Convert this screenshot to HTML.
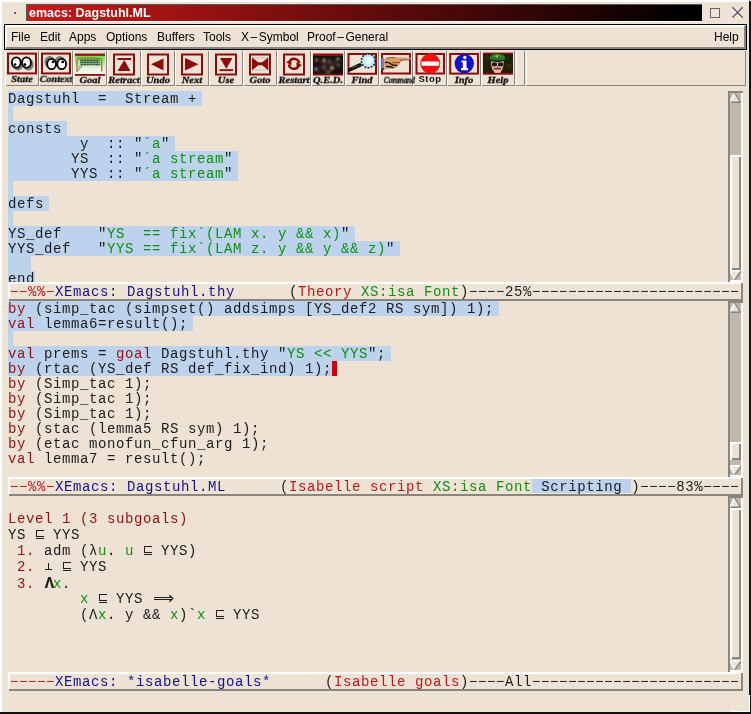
<!DOCTYPE html><html><head><meta charset="utf-8"><style>
*{box-sizing:border-box}
body{margin:0;width:751px;height:714px;overflow:hidden;background:#eee2d5;position:relative;font-family:"Liberation Mono",monospace;}
.a{position:absolute}
.t,.ml,.menu,.lbl,.ttl{will-change:transform}
.t{position:absolute;left:8px;height:15px;font-size:14px;letter-spacing:0.6px;line-height:15px;white-space:pre;color:#1c1c1c}
.ml{position:absolute;left:10px;height:15px;font-size:14px;letter-spacing:0.6px;line-height:15px;white-space:pre;color:#1c1c1c}
.hl{position:absolute;background:#bdd2ec}
.bo{font-weight:bold;display:inline-block;width:9px;font-size:16.5px;letter-spacing:0;text-indent:0.5px}.r{color:#941010}.g{color:#109010}.b{color:#12128e}.mr{color:#bc1818}
.menu{position:absolute;top:30px;font-family:"Liberation Sans",sans-serif;font-size:12px;line-height:14px;color:#000}
.lbl{position:absolute;top:74px;width:34px;text-align:center;font-family:"Liberation Serif",serif;font-weight:bold;font-style:italic;font-size:10.5px;line-height:12px;color:#111;-webkit-text-stroke:0.35px #111}
</style></head><body>

<div class="a" style="left:0;top:0;width:2px;height:714px;background:#fff"></div>
<div class="a" style="left:0;top:0;width:749px;height:2px;background:#fff"></div>
<div class="a" style="left:749px;top:1px;width:2px;height:694px;background:#111"></div>
<div class="a" style="left:0;top:712px;width:733px;height:2px;background:#111"></div>
<div class="a" style="left:750px;top:695px;width:1px;height:19px;background:#111"></div>
<div class="a" style="left:749px;top:695px;width:1px;height:17px;background:#fff"></div>
<div class="a" style="left:747px;top:695px;width:2px;height:1px;background:#fff"></div>
<div class="a" style="left:0;top:712px;width:751px;height:2px;background:#111"></div>
<div class="a" style="left:732px;top:711px;width:18px;height:1px;background:#fff"></div>
<div class="a" style="left:732px;top:709px;width:1px;height:2px;background:#fff"></div>
<div class="a" style="left:26px;top:4px;width:676px;height:17px;background:linear-gradient(to right,#cc1818,#000 98%);border-left:1px solid #555;border-top:1px solid #555"></div>
<div class="a" style="left:26px;top:21px;width:677px;height:1px;background:#fff"></div>
<div class="a ttl" style="left:29px;top:4.7px;height:17px;font-family:'Liberation Sans',sans-serif;font-weight:bold;font-size:12.5px;line-height:17px;color:#fff;white-space:pre">emacs: Dagstuhl.ML</div>
<div class="a" style="left:13px;top:11px;width:3px;height:3px;background:#555;border-top:1px solid #fff;border-left:1px solid #fff"></div>
<div class="a" style="left:710px;top:8px;width:10px;height:10px;border:1px solid #666"></div>
<svg class="a" style="left:728px;top:3.4px" width="20" height="18"><path d="M4.3 4.3 L14.7 14.7 M14.7 4.3 L4.3 14.7" stroke="#fff" stroke-width="1.5" transform="translate(-0.9,0.9)"/><path d="M4.3 4.3 L14.7 14.7 M14.7 4.3 L4.3 14.7" stroke="#666" stroke-width="1.6"/></svg>
<div class="a" style="left:4px;top:24px;width:743px;height:26px;border:1px solid #000;background:#eee2d5"></div>
<div class="a" style="left:5px;top:25px;width:741px;height:2px;background:#fff"></div>
<div class="a" style="left:5px;top:25px;width:2px;height:23px;background:#fff"></div>
<div class="a" style="left:6px;top:47px;width:740px;height:2px;background:#8a867e"></div>
<div class="a" style="left:744px;top:26px;width:2px;height:23px;background:#8a867e"></div>
<div class="menu" style="left:11px">File</div>
<div class="menu" style="left:40px">Edit</div>
<div class="menu" style="left:69px">Apps</div>
<div class="menu" style="left:106px">Options</div>
<div class="menu" style="left:157px">Buffers</div>
<div class="menu" style="left:203px">Tools</div>
<div class="menu" style="left:241px">X<span style="margin:0 1.5px">–</span>Symbol</div>
<div class="menu" style="left:307px">Proof<span style="margin:0 1.5px">–</span>General</div>
<div class="menu" style="left:714px">Help</div>
<div class="a" style="left:5px;top:51px;width:1px;height:35px;background:#fff"></div>
<div class="a" style="left:38px;top:51px;width:1px;height:35px;background:#8a867e"></div>
<div class="a" style="left:6px;top:85px;width:33px;height:1px;background:#8a867e"></div>
<div class="a" style="left:39px;top:51px;width:1px;height:35px;background:#fff"></div>
<div class="a" style="left:72px;top:51px;width:1px;height:35px;background:#8a867e"></div>
<div class="a" style="left:40px;top:85px;width:33px;height:1px;background:#8a867e"></div>
<div class="a" style="left:73px;top:51px;width:1px;height:35px;background:#fff"></div>
<div class="a" style="left:106px;top:51px;width:1px;height:35px;background:#8a867e"></div>
<div class="a" style="left:74px;top:85px;width:33px;height:1px;background:#8a867e"></div>
<div class="a" style="left:107px;top:51px;width:1px;height:35px;background:#fff"></div>
<div class="a" style="left:140px;top:51px;width:1px;height:35px;background:#8a867e"></div>
<div class="a" style="left:108px;top:85px;width:33px;height:1px;background:#8a867e"></div>
<div class="a" style="left:141px;top:51px;width:1px;height:35px;background:#fff"></div>
<div class="a" style="left:174px;top:51px;width:1px;height:35px;background:#8a867e"></div>
<div class="a" style="left:142px;top:85px;width:33px;height:1px;background:#8a867e"></div>
<div class="a" style="left:175px;top:51px;width:1px;height:35px;background:#fff"></div>
<div class="a" style="left:208px;top:51px;width:1px;height:35px;background:#8a867e"></div>
<div class="a" style="left:176px;top:85px;width:33px;height:1px;background:#8a867e"></div>
<div class="a" style="left:209px;top:51px;width:1px;height:35px;background:#fff"></div>
<div class="a" style="left:242px;top:51px;width:1px;height:35px;background:#8a867e"></div>
<div class="a" style="left:210px;top:85px;width:33px;height:1px;background:#8a867e"></div>
<div class="a" style="left:243px;top:51px;width:1px;height:35px;background:#fff"></div>
<div class="a" style="left:276px;top:51px;width:1px;height:35px;background:#8a867e"></div>
<div class="a" style="left:244px;top:85px;width:33px;height:1px;background:#8a867e"></div>
<div class="a" style="left:277px;top:51px;width:1px;height:35px;background:#fff"></div>
<div class="a" style="left:310px;top:51px;width:1px;height:35px;background:#8a867e"></div>
<div class="a" style="left:278px;top:85px;width:33px;height:1px;background:#8a867e"></div>
<div class="a" style="left:311px;top:51px;width:1px;height:35px;background:#fff"></div>
<div class="a" style="left:344px;top:51px;width:1px;height:35px;background:#8a867e"></div>
<div class="a" style="left:312px;top:85px;width:33px;height:1px;background:#8a867e"></div>
<div class="a" style="left:345px;top:51px;width:1px;height:35px;background:#fff"></div>
<div class="a" style="left:378px;top:51px;width:1px;height:35px;background:#8a867e"></div>
<div class="a" style="left:346px;top:85px;width:33px;height:1px;background:#8a867e"></div>
<div class="a" style="left:379px;top:51px;width:1px;height:35px;background:#fff"></div>
<div class="a" style="left:412px;top:51px;width:1px;height:35px;background:#8a867e"></div>
<div class="a" style="left:380px;top:85px;width:33px;height:1px;background:#8a867e"></div>
<div class="a" style="left:413px;top:51px;width:1px;height:35px;background:#fff"></div>
<div class="a" style="left:446px;top:51px;width:1px;height:35px;background:#8a867e"></div>
<div class="a" style="left:414px;top:85px;width:33px;height:1px;background:#8a867e"></div>
<div class="a" style="left:447px;top:51px;width:1px;height:35px;background:#fff"></div>
<div class="a" style="left:480px;top:51px;width:1px;height:35px;background:#8a867e"></div>
<div class="a" style="left:448px;top:85px;width:33px;height:1px;background:#8a867e"></div>
<div class="a" style="left:481px;top:51px;width:1px;height:35px;background:#fff"></div>
<div class="a" style="left:514px;top:51px;width:1px;height:35px;background:#8a867e"></div>
<div class="a" style="left:482px;top:85px;width:33px;height:1px;background:#8a867e"></div>
<div class="a" style="left:516px;top:51px;width:1px;height:35px;background:#fff"></div>
<div class="a" style="left:524px;top:51px;width:1px;height:35px;background:#8a867e"></div>
<div class="a" style="left:516px;top:85px;width:9px;height:1px;background:#8a867e"></div>
<div class="a" style="left:526px;top:51px;width:1px;height:35px;background:#fff"></div>
<div class="a" style="left:745px;top:51px;width:1px;height:35px;background:#8a867e"></div>
<div class="a" style="left:526px;top:85px;width:220px;height:1px;background:#8a867e"></div>
<div class="lbl" style="left:5px;top:74.0px;transform:scaleY(0.9);transform-origin:50% 0;">State</div>
<div class="lbl" style="left:39px;top:74.0px;transform:scaleY(0.9);transform-origin:50% 0;transform:scale(0.96,0.9);">Context</div>
<div class="lbl" style="left:73px;top:75.0px;transform:scaleY(0.9);transform-origin:50% 0;">Goal</div>
<div class="lbl" style="left:107px;top:75.0px;transform:scaleY(0.9);transform-origin:50% 0;">Retract</div>
<div class="lbl" style="left:141px;top:75.0px;transform:scaleY(0.9);transform-origin:50% 0;">Undo</div>
<div class="lbl" style="left:175px;top:75.0px;transform:scaleY(0.9);transform-origin:50% 0;">Next</div>
<div class="lbl" style="left:209px;top:75.0px;transform:scaleY(0.9);transform-origin:50% 0;">Use</div>
<div class="lbl" style="left:243px;top:75.0px;transform:scaleY(0.9);transform-origin:50% 0;">Goto</div>
<div class="lbl" style="left:277px;top:75.0px;transform:scaleY(0.9);transform-origin:50% 0;">Restart</div>
<div class="lbl" style="left:311px;top:75.0px;transform:scaleY(0.9);transform-origin:50% 0;">Q.E.D.</div>
<div class="lbl" style="left:345px;top:75.0px;transform:scaleY(0.9);transform-origin:50% 0;">Find</div>
<div class="lbl" style="left:379px;top:74.5px;transform:scale(0.72,0.9);transform-origin:50% 0;font-size:10.5px;letter-spacing:-0.3px;color:#333;">Command</div>
<div class="lbl" style="left:413px;font-family:'Liberation Sans',sans-serif;font-style:normal;font-weight:bold;font-size:9.5px;letter-spacing:0.5px;-webkit-text-stroke:0;color:#111;top:73.3px;">Stop</div>
<div class="lbl" style="left:447px;top:74.5px;transform:scaleY(0.9);transform-origin:50% 0;">Info</div>
<div class="lbl" style="left:481px;top:75.0px;transform:scaleY(0.9);transform-origin:50% 0;">Help</div>
<svg class="a" style="left:0;top:0" width="751" height="90"><rect x="8.0" y="53.6" width="28.0" height="19.8" fill="none" stroke="#8b0c0c" stroke-width="2"/><ellipse cx="18.05" cy="64.5" rx="5.3" ry="6" fill="#666" opacity="0.85"/><ellipse cx="28.30" cy="64.5" rx="5.3" ry="6" fill="#666" opacity="0.85"/><ellipse cx="16.25" cy="62.5" rx="4.4" ry="5.2" fill="#fff" stroke="#000" stroke-width="1.8"/><ellipse cx="26.50" cy="62.5" rx="4.4" ry="5.2" fill="#fff" stroke="#000" stroke-width="1.8"/><circle cx="15" cy="64.6" r="1.4" fill="#000"/><circle cx="24.9" cy="64.6" r="1.4" fill="#000"/><rect x="42.0" y="53.6" width="28.0" height="19.8" fill="none" stroke="#8b0c0c" stroke-width="2"/><ellipse cx="49.80" cy="62" rx="5.3" ry="6" fill="#666" opacity="0.85"/><ellipse cx="59.90" cy="62" rx="5.3" ry="6" fill="#666" opacity="0.85"/><ellipse cx="51.60" cy="64" rx="4.4" ry="5.2" fill="#fff" stroke="#000" stroke-width="1.8"/><ellipse cx="61.70" cy="64" rx="4.4" ry="5.2" fill="#fff" stroke="#000" stroke-width="1.8"/><circle cx="53.2" cy="61.9" r="1.4" fill="#000"/><circle cx="62.7" cy="61.9" r="1.4" fill="#000"/><defs><linearGradient id="gg" x1="0" y1="0" x2="0" y2="1"><stop offset="0" stop-color="#5ee050"/><stop offset="0.5" stop-color="#c8eec0"/><stop offset="0.75" stop-color="#eef4ea"/><stop offset="1" stop-color="#f4f4f0"/></linearGradient></defs><rect x="75" y="55.8" width="30" height="18.2" fill="url(#gg)"/><rect x="75" y="53.6" width="30" height="2.2" fill="#8b0c0c"/><rect x="75" y="74" width="30" height="1.8" fill="#8b0c0c"/><path d="M80 59.5 Q90 58 100 59.5 L100.5 66 Q90 65 80.5 66 Z" fill="#445040" opacity="0.35"/><path d="M80 60.5 H100 M80 62.5 H100.5 M80.5 64.5 H100.5 M82 59 V66 M85 59 V66 M88 59 V65.5 M91 59 V65.5 M94 59 V65.5 M97 59 V66 M80 66 L78 71 M82 66 L79 70" fill="none" stroke="#1a2018" stroke-width="0.7" stroke-dasharray="1 0.7"/><path d="M77 72 V60 Q77.5 58.2 80 58.3 Q90 57.5 100 58.3 Q102 58.5 101.8 60.5 V71.5" fill="none" stroke="#a07818" stroke-width="1.3"/><rect x="114.0" y="54.5" width="20.0" height="20.0" fill="none" stroke="#8b0c0c" stroke-width="2"/><rect x="117.5" y="58" width="13.5" height="2" fill="#8b0c0c"/><path d="M124.3 60 L130.5 71 H117.5 Z" fill="#8b0c0c"/><rect x="148.0" y="54.5" width="20.0" height="20.0" fill="none" stroke="#8b0c0c" stroke-width="2"/><path d="M151 64.3 L163.5 58.5 V70.5 Z" fill="#8b0c0c"/><rect x="182.0" y="54.5" width="20.0" height="20.0" fill="none" stroke="#8b0c0c" stroke-width="2"/><path d="M198.5 64.3 L185 58 V70.5 Z" fill="#8b0c0c"/><rect x="216.0" y="54.5" width="20.0" height="20.0" fill="none" stroke="#8b0c0c" stroke-width="2"/><path d="M220 58 H232.5 L226.3 68.8 Z" fill="#8b0c0c"/><rect x="219.5" y="69.2" width="13.5" height="1.9" fill="#8b0c0c"/><rect x="250.0" y="54.5" width="20.0" height="20.0" fill="none" stroke="#8b0c0c" stroke-width="2"/><path d="M252 57.8 H268.3 M252 70 H268.3" stroke="#b8c0c8" stroke-width="0.9"/><path d="M252 57.5 L260.2 63.8 L268.3 57.5 V70.2 L260.2 63.8 L252 70.2 Z" fill="#8b0c0c"/><rect x="258.7" y="62.3" width="3" height="3" fill="#8b0c0c"/><rect x="284.0" y="54.5" width="20.0" height="20.0" fill="none" stroke="#8b0c0c" stroke-width="2"/><path d="M299.2 63.3 A5.2 5.3 0 0 0 289.5 61.5" fill="none" stroke="#8b0c0c" stroke-width="2.4"/><path d="M288.8 64.3 A5.2 5.3 0 0 0 298.5 66.1" fill="none" stroke="#8b0c0c" stroke-width="2.4"/><path d="M286 62.3 L291.2 59.6 L291.6 65.6 Z" fill="#8b0c0c"/><path d="M302 65.3 L296.8 68 L296.4 62 Z" fill="#8b0c0c"/><rect x="313" y="53.5" width="30" height="22" fill="#8b0c0c"/><defs><radialGradient id="qg" cx="0.5" cy="0.5" r="0.7"><stop offset="0" stop-color="#2a201c"/><stop offset="1" stop-color="#0e0a08"/></radialGradient><filter id="bl" x="-50%" y="-50%" width="200%" height="200%"><feGaussianBlur stdDeviation="0.8"/></filter></defs><rect x="313" y="56" width="30" height="17.8" fill="url(#qg)"/><g filter="url(#bl)"><path d="M316 69 L320 73 M324 60 L326 73 M332 68 L328 73 M338 59 L331 67" stroke="#b89070" stroke-width="0.8" opacity="0.6"/><circle cx="316.6" cy="60.0" r="1.2" fill="#d8a090"/><circle cx="324.0" cy="60.3" r="1.5" fill="#f0a070"/><circle cx="329.5" cy="61.5" r="1.0" fill="#c0c8e8"/><circle cx="338.0" cy="59.0" r="1.4" fill="#80c070"/><circle cx="338.5" cy="65.0" r="1.1" fill="#d8b8a0"/><circle cx="323.0" cy="67.5" r="1.1" fill="#d090b8"/><circle cx="316.0" cy="69.0" r="1.5" fill="#c098e8"/><circle cx="332.0" cy="68.0" r="1.5" fill="#f0e090"/><circle cx="328.5" cy="72.0" r="1.0" fill="#f0e0c0"/></g><rect x="348.5" y="54.0" width="27.5" height="19.8" fill="none" stroke="#8b0c0c" stroke-width="2"/><path d="M349.5 69.8 L360 65" stroke="#111" stroke-width="3.6" stroke-linecap="round"/><path d="M352 68 L358 65.4" stroke="#666" stroke-width="0.8"/><circle cx="368.3" cy="60.8" r="6.9" fill="#c4ecfa" stroke="#1a2a3a" stroke-width="1.6" stroke-dasharray="2 1.2"/><circle cx="368.6" cy="60.4" r="3.4" fill="#f4fcff" opacity="0.8"/><rect x="382.0" y="54.0" width="28.0" height="19.5" fill="none" stroke="#8b0c0c" stroke-width="2"/><rect x="381.3" y="58" width="3" height="11.8" fill="#8080b8"/><rect x="381.3" y="68.5" width="3" height="1.3" fill="#202040"/><path d="M384.3 59.5 Q387 57.6 393 57.3 L411.5 57.8 Q412.3 59 411 59.6 L402 60.3 Q401.5 62 400 62.6 Q400.3 64.6 398 65.3 Q397.5 67.6 394 68.2 Q389 69.3 384.3 68.8 Z" fill="#dc9c64"/><path d="M385 62.5 Q389 61.8 391 64 Q393 66 397 65.5 M386 66.5 Q390 66.2 393.5 67.8" stroke="#111" stroke-width="1.4" fill="none"/><path d="M392 62.8 Q396 62.3 400 62.6 M393 65 Q396 64.8 398 65.3 M400 60.3 L411 59.6 M386 58.3 Q390 57.4 395 57.4" stroke="#5a3010" stroke-width="0.7" fill="none"/><rect x="416.5" y="54.0" width="27.5" height="19.5" fill="none" stroke="#8b0c0c" stroke-width="2"/><circle cx="430.3" cy="63.6" r="10" fill="#ee1111"/><rect x="421.5" y="61.5" width="17.7" height="4.3" fill="#fff" rx="0.8"/><rect x="450.2" y="54.0" width="27.8" height="19.6" fill="none" stroke="#8b0c0c" stroke-width="2"/><circle cx="464.3" cy="63.6" r="9.7" fill="#1010cc"/><circle cx="464.8" cy="57.5" r="1.7" fill="#fff"/><path d="M461.5 60.5 H466.5 V68 H468 V70.2 H461 V68 H462.8 V62.5 H461.5 Z" fill="#fff"/><rect x="483" y="52.6" width="30" height="22.1" fill="#8b0c0c"/><rect x="483" y="54" width="30" height="18.9" fill="#221e0a"/><g filter="url(#bl)" opacity="0.6"><circle cx="487" cy="58" r="2" fill="#4a3a10"/><circle cx="509" cy="66" r="2.5" fill="#4a3a10"/><circle cx="487" cy="69" r="2" fill="#3a3010"/><circle cx="508" cy="57" r="1.5" fill="#3a3a10"/></g><path d="M491 60.5 Q490.8 72.8 497.5 72.9 Q503.8 72.8 503.8 60.5 Z" fill="#d8aa98"/><path d="M494 69 Q497 73 501 69 L501 72.9 H494 Z" fill="#f0c8b8" opacity="0.6"/><path d="M489.5 60 Q489 53.6 497.5 53.5 Q506 53.6 505.5 60 Q501 61.5 497.5 61.5 Q493 61.5 489.5 60 Z" fill="#237a23"/><path d="M492 56.5 Q497 54.5 503 56.5" stroke="#50b050" stroke-width="0.8" fill="none" opacity="0.7"/><path d="M490 60.2 Q497.5 62.3 505 60.2" stroke="#111" stroke-width="1.3" fill="none"/><circle cx="497" cy="56.2" r="1.3" fill="#b0a860"/><rect x="492" y="62.6" width="5" height="3.6" rx="1.2" fill="#1a1a1a"/><rect x="498" y="62.6" width="5" height="3.6" rx="1.2" fill="#1a1a1a"/><rect x="494" y="68" width="7" height="1.4" fill="#6a3028"/><rect x="497" y="66" width="1.5" height="2" fill="#b88070"/></svg>
<div class="a" style="left:0;top:91px;width:728px;height:191px;overflow:hidden">
<div class="hl" style="left:8px;top:0px;width:194px;height:15px"></div>
<div class="hl" style="left:8px;top:15px;width:5px;height:15px"></div>
<div class="hl" style="left:8px;top:30px;width:59px;height:15px"></div>
<div class="hl" style="left:8px;top:45px;width:167px;height:15px"></div>
<div class="hl" style="left:8px;top:60px;width:230px;height:15px"></div>
<div class="hl" style="left:8px;top:75px;width:230px;height:15px"></div>
<div class="hl" style="left:8px;top:90px;width:5px;height:15px"></div>
<div class="hl" style="left:8px;top:105px;width:41px;height:15px"></div>
<div class="hl" style="left:8px;top:120px;width:5px;height:15px"></div>
<div class="hl" style="left:8px;top:135px;width:347px;height:15px"></div>
<div class="hl" style="left:8px;top:150px;width:392px;height:15px"></div>
<div class="hl" style="left:8px;top:165px;width:23px;height:15px"></div>
<div class="hl" style="left:8px;top:180px;width:27px;height:15px"></div>
<div class="t" style="top:1.0px;">Dagstuhl  =  Stream +</div>
<div class="t" style="top:16.0px;"></div>
<div class="t" style="top:31.0px;">consts</div>
<div class="t" style="top:46.0px;">        y  :: "<span class="g">´a</span>"</div>
<div class="t" style="top:61.0px;">       YS  :: "<span class="g">´a stream</span>"</div>
<div class="t" style="top:76.0px;">       YYS :: "<span class="g">´a stream</span>"</div>
<div class="t" style="top:91.0px;"></div>
<div class="t" style="top:106.0px;">defs</div>
<div class="t" style="top:121.0px;"></div>
<div class="t" style="top:136.0px;">YS_def    "<span class="g">YS  == fix`(LAM x. y &amp;&amp; x)</span>"</div>
<div class="t" style="top:151.0px;">YYS_def   "<span class="g">YYS == fix`(LAM z. y &amp;&amp; y &amp;&amp; z)</span>"</div>
<div class="t" style="top:166.0px;">  </div>
<div class="t" style="top:181.0px;">end</div>
</div>
<div class="a" style="left:0;top:301px;width:728px;height:176px;overflow:hidden">
<div class="hl" style="left:8px;top:0px;width:491px;height:15px"></div>
<div class="hl" style="left:8px;top:15px;width:185px;height:15px"></div>
<div class="hl" style="left:8px;top:30px;width:5px;height:15px"></div>
<div class="hl" style="left:8px;top:45px;width:383px;height:15px"></div>
<div class="hl" style="left:8px;top:60px;width:324px;height:15px"></div>
<div class="a" style="left:332px;top:60px;width:5px;height:15px;background:#cc0000"></div>
<div class="t" style="top:1.0px;"><span class="r">by</span> (simp_tac (simpset() addsimps [YS_def2 RS sym]) 1);</div>
<div class="t" style="top:16.0px;"><span class="r">val</span> lemma6=result();</div>
<div class="t" style="top:31.0px;"></div>
<div class="t" style="top:46.0px;"><span class="r">val</span> prems = <span class="r">goal</span> Dagstuhl.thy "<span class="g">YS &lt;&lt; YYS</span>";</div>
<div class="t" style="top:61.0px;"><span class="r">by</span> (rtac (YS_def RS def_fix_ind) 1);</div>
<div class="t" style="top:76.0px;"><span class="r">by</span> (Simp_tac 1);</div>
<div class="t" style="top:91.0px;"><span class="r">by</span> (Simp_tac 1);</div>
<div class="t" style="top:106.0px;"><span class="r">by</span> (Simp_tac 1);</div>
<div class="t" style="top:121.0px;"><span class="r">by</span> (stac (lemma5 RS sym) 1);</div>
<div class="t" style="top:136.0px;"><span class="r">by</span> (etac monofun_cfun_arg 1);</div>
<div class="t" style="top:151.0px;"><span class="r">val</span> lemma7 = result();</div>
</div>
<div class="t" style="top:512.0px;"><span class="r">Level 1 (3 subgoals)</span></div>
<div class="t" style="top:528.0px;">YS <svg width="9" height="15" style="vertical-align:top;display:inline-block"><path d="M1.5 2.5 H9 M1.5 2 V9 M1 8.5 H9 M1 10.5 H9" stroke="#1c1c1c" stroke-width="1" fill="none"/></svg> YYS</div>
<div class="t" style="top:544.0px;"> <span class="r">1.</span> adm (λ<span class="g">u</span>. <span class="g">u</span> <svg width="9" height="15" style="vertical-align:top;display:inline-block"><path d="M1.5 2.5 H9 M1.5 2 V9 M1 8.5 H9 M1 10.5 H9" stroke="#1c1c1c" stroke-width="1" fill="none"/></svg> YYS)</div>
<div class="t" style="top:560.0px;"> <span class="r">2.</span> <svg width="9" height="15" style="vertical-align:top;display:inline-block"><path d="M4.5 3 V10 M1 9.5 H8" stroke="#1c1c1c" stroke-width="1" fill="none"/></svg> <svg width="9" height="15" style="vertical-align:top;display:inline-block"><path d="M1.5 2.5 H9 M1.5 2 V9 M1 8.5 H9 M1 10.5 H9" stroke="#1c1c1c" stroke-width="1" fill="none"/></svg> YYS</div>
<div class="t" style="top:576.0px;"> <span class="r">3.</span> <span class="bo">Λ</span><span class="g">x</span>.</div>
<div class="t" style="top:592.0px;">        <span class="g">x</span> <svg width="9" height="15" style="vertical-align:top;display:inline-block"><path d="M1.5 2.5 H9 M1.5 2 V9 M1 8.5 H9 M1 10.5 H9" stroke="#1c1c1c" stroke-width="1" fill="none"/></svg> YYS <svg width="9" height="15" style="vertical-align:top;display:inline-block;overflow:visible"><path d="M2 5.5 H19 M2 7.5 H19" stroke="#1c1c1c" stroke-width="1" fill="none"/><path d="M17.4 3.2 L20.8 6.5 L17.4 9.8" stroke="#1c1c1c" stroke-width="1.2" fill="none"/></svg></div>
<div class="t" style="top:608.0px;">        (Λ<span class="g">x</span>. y &amp;&amp; <span class="g">x</span>)`<span class="g">x</span> <svg width="9" height="15" style="vertical-align:top;display:inline-block"><path d="M1.5 2.5 H9 M1.5 2 V9 M1 8.5 H9 M1 10.5 H9" stroke="#1c1c1c" stroke-width="1" fill="none"/></svg> YYS</div>
<div class="a" style="left:8px;top:282px;width:735px;height:19px;background:#eee2d5"></div>
<div class="a" style="left:8px;top:282px;width:735px;height:2px;background:#fff"></div>
<div class="a" style="left:8px;top:282px;width:2px;height:18px;background:#fff"></div>
<div class="a" style="left:9px;top:299px;width:734px;height:2px;background:#8a867e"></div>
<div class="a" style="left:741px;top:283px;width:2px;height:18px;background:#8a867e"></div>
<div class="ml" style="top:284.8px;"><span class="mr">−−%%−</span><span class="b">XEmacs: Dagstuhl.thy</span>      (<span class="mr">Theory</span> <span class="g">XS:isa Font</span>)−−−−25%−−−−−−−−−−−−−−−−−−−−−−−</div>
<div class="a" style="left:8px;top:477px;width:735px;height:19px;background:#eee2d5"></div>
<div class="hl" style="left:532px;top:479px;width:99px;height:14px"></div>
<div class="a" style="left:8px;top:477px;width:735px;height:2px;background:#fff"></div>
<div class="a" style="left:8px;top:477px;width:2px;height:18px;background:#fff"></div>
<div class="a" style="left:9px;top:494px;width:734px;height:2px;background:#8a867e"></div>
<div class="a" style="left:741px;top:478px;width:2px;height:18px;background:#8a867e"></div>
<div class="ml" style="top:479.8px;"><span class="mr">−−%%−</span><span class="b">XEmacs: Dagstuhl.ML</span>      (<span class="mr">Isabelle script</span> <span class="g">XS:isa Font</span> Scripting )−−−−83%−−−−</div>
<div class="a" style="left:8px;top:672px;width:735px;height:19px;background:#eee2d5"></div>
<div class="a" style="left:8px;top:672px;width:735px;height:2px;background:#fff"></div>
<div class="a" style="left:8px;top:672px;width:2px;height:18px;background:#fff"></div>
<div class="a" style="left:9px;top:689px;width:734px;height:2px;background:#8a867e"></div>
<div class="a" style="left:741px;top:673px;width:2px;height:18px;background:#8a867e"></div>
<div class="ml" style="top:674.8px;"><span class="mr">−−−−−</span><span class="b">XEmacs: *isabelle-goals*</span>      (<span class="mr">Isabelle goals</span>)−−−−All−−−−−−−−−−−−−−−−−−−−−−−</div>
<svg class="a" style="left:0;top:0" width="751" height="714"><rect x="728" y="91" width="15" height="191" fill="#8a867e"/><rect x="730" y="93" width="13" height="189" fill="#fff"/><rect x="730" y="93" width="11" height="187" fill="#c0b8ad"/><clipPath id="c93"><rect x="730" y="93.0" width="11" height="10"/></clipPath><g clip-path="url(#c93)"><rect x="730" y="93.0" width="11" height="10" fill="#c0b8ad"/><path d="M734.7 93.0 L741.5 103.0 H729.5 Z" fill="#eee2d5"/><path d="M729.6 103.0 L734.7 93.0" stroke="#fff" stroke-width="1.4"/><path d="M734.7 93.0 L741 103.0" stroke="#8a867e" stroke-width="1.4"/><rect x="730.5" y="101.4" width="10.5" height="1.6" fill="#8a867e"/></g><clipPath id="d270"><rect x="730" y="270.0" width="11" height="10"/></clipPath><g clip-path="url(#d270)"><rect x="730" y="270.0" width="11" height="10" fill="#c0b8ad"/><path d="M729.5 270.0 H741.5 L734.7 280.0 Z" fill="#eee2d5"/><rect x="730" y="270.0" width="10.5" height="1.6" fill="#fff"/><path d="M729.6 270.0 L734.7 280.0" stroke="#fff" stroke-width="1.4"/><path d="M741 271.0 L734.7 280.0" stroke="#8a867e" stroke-width="1.4"/></g><rect x="730" y="155.0" width="11" height="115.0" fill="#fff"/><rect x="732" y="157.0" width="9" height="113.0" fill="#8a867e"/><rect x="732" y="157.0" width="7" height="111.0" fill="#eee2d5"/><rect x="728" y="301" width="15" height="176" fill="#8a867e"/><rect x="730" y="303" width="13" height="174" fill="#fff"/><rect x="730" y="303" width="11" height="172" fill="#c0b8ad"/><clipPath id="c303"><rect x="730" y="303.0" width="11" height="10"/></clipPath><g clip-path="url(#c303)"><rect x="730" y="303.0" width="11" height="10" fill="#c0b8ad"/><path d="M734.7 303.0 L741.5 313.0 H729.5 Z" fill="#eee2d5"/><path d="M729.6 313.0 L734.7 303.0" stroke="#fff" stroke-width="1.4"/><path d="M734.7 303.0 L741 313.0" stroke="#8a867e" stroke-width="1.4"/><rect x="730.5" y="311.4" width="10.5" height="1.6" fill="#8a867e"/></g><clipPath id="d465"><rect x="730" y="465.0" width="11" height="10"/></clipPath><g clip-path="url(#d465)"><rect x="730" y="465.0" width="11" height="10" fill="#c0b8ad"/><path d="M729.5 465.0 H741.5 L734.7 475.0 Z" fill="#eee2d5"/><rect x="730" y="465.0" width="10.5" height="1.6" fill="#fff"/><path d="M729.6 465.0 L734.7 475.0" stroke="#fff" stroke-width="1.4"/><path d="M741 466.0 L734.7 475.0" stroke="#8a867e" stroke-width="1.4"/></g><rect x="730" y="442.0" width="11" height="18.0" fill="#fff"/><rect x="732" y="444.0" width="9" height="16.0" fill="#8a867e"/><rect x="732" y="444.0" width="7" height="14.0" fill="#eee2d5"/><rect x="728" y="496" width="15" height="176" fill="#8a867e"/><rect x="730" y="498" width="13" height="174" fill="#fff"/><rect x="730" y="498" width="11" height="172" fill="#c0b8ad"/><clipPath id="c498"><rect x="730" y="498.0" width="11" height="10"/></clipPath><g clip-path="url(#c498)"><rect x="730" y="498.0" width="11" height="10" fill="#c0b8ad"/><path d="M734.7 498.0 L741.5 508.0 H729.5 Z" fill="#eee2d5"/><path d="M729.6 508.0 L734.7 498.0" stroke="#fff" stroke-width="1.4"/><path d="M734.7 498.0 L741 508.0" stroke="#8a867e" stroke-width="1.4"/><rect x="730.5" y="506.4" width="10.5" height="1.6" fill="#8a867e"/></g><clipPath id="d660"><rect x="730" y="660.0" width="11" height="10"/></clipPath><g clip-path="url(#d660)"><rect x="730" y="660.0" width="11" height="10" fill="#c0b8ad"/><path d="M729.5 660.0 H741.5 L734.7 670.0 Z" fill="#eee2d5"/><rect x="730" y="660.0" width="10.5" height="1.6" fill="#fff"/><path d="M729.6 660.0 L734.7 670.0" stroke="#fff" stroke-width="1.4"/><path d="M741 661.0 L734.7 670.0" stroke="#8a867e" stroke-width="1.4"/></g><rect x="730" y="508.0" width="11" height="151.0" fill="#fff"/><rect x="732" y="510.0" width="9" height="149.0" fill="#8a867e"/><rect x="732" y="510.0" width="7" height="147.0" fill="#eee2d5"/></svg>
</body></html>
